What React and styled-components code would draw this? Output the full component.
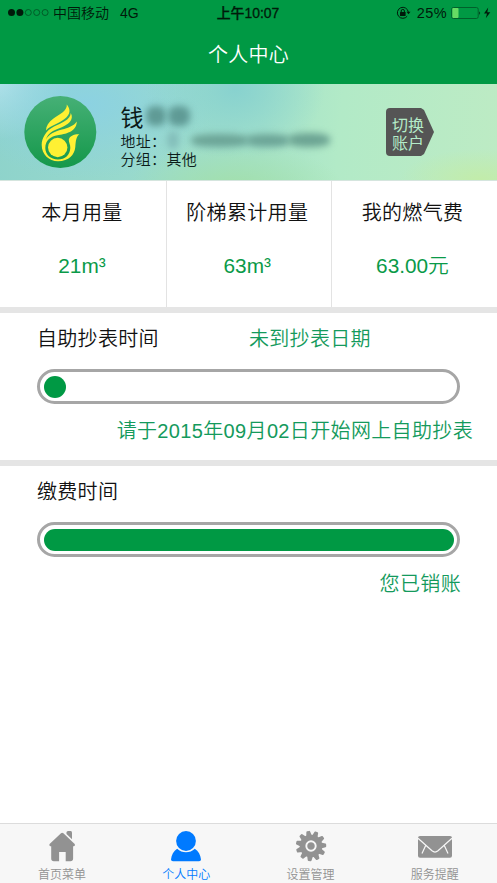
import React from "react";
import styled, { createGlobalStyle } from "styled-components";

const GlobalStyle = createGlobalStyle`
  * {
    box-sizing: border-box;
  }

  body {
    margin: 0;
    background: #ffffff;
    font-family: "Liberation Sans", "Noto Sans CJK SC", sans-serif;
    font-weight: 350;
    color: #111111;
  }
`

const Screen = styled.div`
  display: flex;
  flex-direction: column;
  width: 497px;
  height: 883px;
  overflow: hidden;
`

const StatusBar = styled.div`
  display: grid;
  grid-template-columns: 1fr auto 1fr;
  align-items: center;
  height: 26px;
  padding: 0 5px 0 7px;
  background: #009944;
  color: #001a0a;
  font-size: 14px;
  line-height: 26px;
  white-space: nowrap;
`

const Carrier = styled.div`
  display: flex;
  align-items: center;

  & svg {
    margin-right: 4px;
  }

  & span + span {
    margin-left: 11px;
  }
`

const Clock = styled.div`
  padding-right: 3px;
  font-weight: 500;
  font-size: 13.9px;
  -webkit-text-stroke: 0.3px currentColor;
`

const Indicators = styled.div`
  display: flex;
  align-items: center;
  justify-content: flex-end;

  & span {
    margin: 0 4px 0 6px;
    font-size: 14.5px;
    letter-spacing: 0.4px;
  }
`

const TitleBar = styled.h1`
  height: 58px;
  margin: 0;
  background: #009944;
  color: #ffffff;
  font-size: 20px;
  font-weight: 350;
  line-height: 59px;
  letter-spacing: 0.3px;
  text-align: center;
`

const Profile = styled.section`
  display: flex;
  align-items: flex-start;
  height: 97px;
  padding: 12px 63px 0 24px;
  border-bottom: 1px solid #d5e5de;
  background:
    radial-gradient(ellipse 80px 30px at 480px 95px, #c2ecaa 0%, transparent 100%),
    radial-gradient(ellipse 110px 50px at 235px 108px, #a2dfa8 0%, transparent 100%),
    radial-gradient(ellipse 90px 70px at 235px 5px, #88d2cf 0%, transparent 100%),
    radial-gradient(ellipse 130px 75px at 85px 20px, #8cd2e2 0%, transparent 100%),
    radial-gradient(ellipse 70px 55px at 0 0, #bce6ec 0%, transparent 100%),
    linear-gradient(95deg, #8ed3cb 0%, #99dacd 30%, #a5e2ca 52%, #b2eac7 68%, #bdebc4 100%);
`

const ProfileText = styled.div`
  flex: 1;
  margin-left: 23.5px;
  padding-top: 5px;
`

const ProfileLine = styled.div`
  display: flex;
  align-items: center;
  height: ${props => props.$big ? "30px" : "18px"};
  padding-bottom: ${props => props.$big ? "1px" : "0"};
  font-size: ${props => props.$big ? "23px" : "15px"};
  font-weight: ${props => props.$big ? 400 : 350};
  letter-spacing: ${props => props.$big ? "0" : "0.3px"};
  color: #0b1a18;
  white-space: nowrap;
`

const Smudge = styled.span`
  flex: none;
  width: ${props => props.$w}px;
  height: ${props => props.$h}px;
  margin-left: ${props => props.$gap || 0}px;
  border-radius: 40%;
  background: ${props => props.$color || "#568f8a"};
  filter: blur(3.5px);
`

const SwitchAccount = styled.button`
  display: block;
  width: 48px;
  height: 48px;
  margin-top: 12px;
  padding: 6px 10px 0 6px;
  border: 0;
  border-radius: 4px 0 0 4px;
  background: #555555;
  clip-path: polygon(0 0, 35px 0, 38px 2px, 48px 24px, 38px 46px, 35px 48px, 0 48px);
  color: #b4ecc8;
  font: 400 16px/18px "Liberation Sans", "Noto Sans CJK SC", sans-serif;
  text-align: left;
`

const Stats = styled.section`
  display: grid;
  grid-template-columns: 166.5px 165.5px 1fr;
  height: 126px;
`

const Stat = styled.div`
  padding: 18px 3px 0 0;
  text-align: center;
  border-right: 1px solid #e3e3e3;

  &:first-child {
    padding-right: 1.5px;
  }

  &:last-child {
    border-right: 0;
    padding-right: 4px;
  }
`

const StatLabel = styled.div`
  height: 30px;
  font-size: 20px;
  line-height: 28px;
  letter-spacing: 0.35px;
`

const StatValue = styled.div`
  margin-top: 22px;
  color: #0a9a48;
  font-size: 20.8px;
  line-height: 30px;
`

const Divider = styled.div`
  flex: none;
  height: 6px;
  background: #e5e5e5;
`

const Section = styled.section`
  height: 147px;
  padding: 12px 37px 0 37px;
  font-size: 20px;
  line-height: 28px;
  letter-spacing: 0.3px;
`

const SectionHead = styled.div`
  display: grid;
  grid-template-columns: 212px 1fr;
  height: 44px;
`

const Track = styled.div`
  height: 35px;
  padding: 3.5px;
  border: 3px solid #a6a6a6;
  border-radius: 18px;
`

const Fill = styled.div`
  min-width: 22.5px;
  height: 22.5px;
  border-radius: 12px;
  background: #009944;
`

const Green = styled.span`
  color: #149a5c;
`

const Note = styled(Green)`
  display: block;
  margin: 13px ${props => props.$right}px 0 -10px;
  letter-spacing: 0.35px;
  text-align: right;
  white-space: nowrap;
`

const TabBar = styled.nav`
  display: grid;
  grid-template-columns: repeat(4, 1fr);
  height: 60px;
  margin-top: auto;
  border-top: 1px solid #dcdcdc;
  background: #f7f7f7;
`

const Tab = styled.a`
  display: flex;
  flex-direction: column;
  align-items: center;
  padding: 6px 0 0;
  color: ${props => props.$active ? "#007aff" : "#929292"};
  font-size: 12px;
  line-height: 18px;

  & svg {
    display: block;
    margin-bottom: 4px;
  }
`

const Logo = () => (
  <svg width="73" height="73" viewBox="0 0 73 73">
    <defs>
      <linearGradient id="disc" x1="0" y1="0" x2="0" y2="1">
        <stop offset="0" stopColor="#46b076" />
        <stop offset="1" stopColor="#14984a" />
      </linearGradient>
    </defs>
    <circle cx="36.3" cy="36" r="36" fill="url(#disc)" />
    <g fill="#fff033">
      <path d="M42.800 8.500C43.500 15 35 18.500 29.500 22.500C24.500 26 22 30 22 34.500C27 29 35 27.500 40.500 23C47 18 46.500 13 42.800 8.500Z" />
      <path d="M46.800 17C46.500 24 37 27 30 30.500C22 34.500 17.700 42 17.700 49C17.700 58.500 25 65.200 34 65.200C45 65.200 50.500 59 51.300 51C51.800 45 52 41 55.300 38.200C50 38 45.500 40 44.800 43.500C44.600 46 46.500 48.500 46.300 52C46 59 41 63.500 34 63.500C26.500 63.500 21.300 58.500 21.300 52C21.300 44 27 40.500 33.500 39.300C41 38 52.500 36.500 52.800 25.600C50 30 44 32 38 33.600C30 35.500 25 38.500 22 43.500C24 37 29 34.500 36 32C44 28.800 50.500 24 46.800 17Z" />
      <circle cx="33.700" cy="51.500" r="9.700" />
    </g>
  </svg>
)

const SignalDots = () => (
  <svg width="42" height="10" viewBox="0 0 42 10">
    {[0, 1, 2, 3, 4].map(i => (
      <circle
        key={i}
        cx={4.5 + i * 8.4}
        cy="4.5"
        r={i < 2 ? 3.5 : 3}
        fill={i < 2 ? "#001a0a" : "none"}
        stroke={i < 2 ? "none" : "#004d22"}
        strokeWidth="0.8"
      />
    ))}
  </svg>
)

const RotationLock = () => (
  <svg width="15" height="14" viewBox="0 0 15 14">
    <path d="M11.200 10.200A5.500 5.500 0 1 1 12.300 6" fill="none" stroke="#001a0a" strokeWidth="1" />
    <path d="M10.500 5.800h4l-2 2.500z" fill="#001a0a" />
    <rect x="4" y="6" width="5.600" height="4" rx="0.500" fill="#001a0a" />
    <path d="M5.200 6.200V5a1.600 1.600 0 0 1 3.200 0v1.200" fill="none" stroke="#001a0a" strokeWidth="1" />
  </svg>
)

const Battery = () => (
  <svg width="41" height="14" viewBox="0 0 41 14">
    <rect x="0.700" y="1.500" width="26.500" height="11" rx="1.800" fill="none" stroke="#00602b" />
    <rect x="1.300" y="2.100" width="6.200" height="9.800" rx="0.800" fill="#66dc64" />
    <path d="M28.300 5.200q1.800 1.800 0 3.700z" fill="#001a0a" />
    <path d="M37.200 1.500L33 7.500h3L34.800 12.300L39.300 6.200h-3z" fill="#001a0a" />
  </svg>
)

const HomeIcon = () => (
  <svg width="30" height="32" viewBox="0 0 30 32" fill="#929292">
    <path d="M14 3.200q1.200-1 2.400 0L27.700 14q1 1.400-.7 2.200h-.9V28.500q0 2.700-2.700 2.700h-4.700v-9.200h-6.600v9.200H6.900q-2.700 0-2.700-2.700V16.200h-.9q-1.700-.8-.7-2.200z" />
    <path d="M19.500 2.500q0-1.500 1.500-1.500h2.700q1.300 0 1.300 1.500v6.800L19.500 4z" />
  </svg>
)

const PersonIcon = () => (
  <svg width="32" height="32" viewBox="0 0 32 32" fill="#007aff">
    <circle cx="16" cy="11" r="9.900" />
    <path d="M7.200 18.800C12 23.500 20 23.500 24.800 18.800C28.500 21 30.500 25 31 29.500Q31 31.300 29 31.300H3Q1 31.300 1 29.500C1.500 25 3.500 21 7.200 18.800Z" />
  </svg>
)

const GearIcon = () => (
  <svg width="32" height="32" viewBox="0 0 32 32" fill="#929292">
    <g transform="translate(16 16)">
      {Array.from({ length: 11 }, (_, i) => (
        <path
          key={i}
          transform={`rotate(${i * 360 / 11 - 11})`}
          d="M-2.900-10L-1.900-14.500Q-1.700-15.200-1-15.200H1Q1.700-15.200 1.900-14.500L2.900-10Z"
        />
      ))}
      <circle r="11.300" />
      <circle r="4.700" fill="none" stroke="#f7f7f7" strokeWidth="1.900" />
    </g>
  </svg>
)

const MailIcon = () => (
  <svg width="36" height="32" viewBox="0 0 36 32">
    <rect x="1" y="6" width="34" height="21.700" rx="2" fill="#929292" />
    <g fill="none" stroke="#f7f7f7" strokeWidth="1.200">
      <path d="M1 8.200L15 20.800Q18 23.300 21 20.800L35 8.200" />
      <path d="M8.800 15.300L5 23.500M27.200 15.300L31 23.500" />
    </g>
  </svg>
)

const stats = [
  { label: "本月用量", value: "21m³" },
  { label: "阶梯累计用量", value: "63m³" },
  { label: "我的燃气费", value: "63.00元" },
]

const tabs = [
  { label: "首页菜单", Icon: HomeIcon },
  { label: "个人中心", Icon: PersonIcon, active: true },
  { label: "设置管理", Icon: GearIcon },
  { label: "服务提醒", Icon: MailIcon },
]

const Progress = ({ value }) => (
  <Track>
    <Fill style={{ width: `${value}%` }} />
  </Track>
)

export default function App() {
  return (
    <Screen>
      <GlobalStyle />
      <StatusBar>
        <Carrier>
          <SignalDots />
          <span>中国移动</span>
          <span>4G</span>
        </Carrier>
        <Clock>上午10:07</Clock>
        <Indicators>
          <RotationLock />
          <span>25%</span>
          <Battery />
        </Indicators>
      </StatusBar>
      <TitleBar>个人中心</TitleBar>

      <Profile>
        <Logo />
        <ProfileText>
          <ProfileLine $big>
            钱
            <Smudge $w={20} $h={20} $gap={2} $color="#5f9a95" />
            <Smudge $w={22} $h={20} $gap={2} $color="#5f9a95" />
          </ProfileLine>
          <ProfileLine>
            地址：
            <Smudge $w={12} $h={18} $gap={1} $color="#83beba" />
            <Smudge $w={58} $h={13} $gap={12} $color="#6ca597" />
            <Smudge $w={44} $h={13} $gap={-3} $color="#6ca597" />
            <Smudge $w={42} $h={14} $gap={-2} $color="#6ca493" />
          </ProfileLine>
          <ProfileLine>分组：其他</ProfileLine>
        </ProfileText>
        <SwitchAccount>切换<br />账户</SwitchAccount>
      </Profile>

      <Stats>
        {stats.map(({ label, value }) => (
          <Stat key={label}>
            <StatLabel>{label}</StatLabel>
            <StatValue>{value}</StatValue>
          </Stat>
        ))}
      </Stats>

      <Divider />
      <Section>
        <SectionHead>
          <span>自助抄表时间</span>
          <Green>未到抄表日期</Green>
        </SectionHead>
        <Progress value={0} />
        <Note $right={-13}>请于2015年09月02日开始网上自助抄表</Note>
      </Section>

      <Divider />
      <Section>
        <SectionHead>
          <span>缴费时间</span>
        </SectionHead>
        <Progress value={100} />
        <Note $right={-1}>您已销账</Note>
      </Section>

      <TabBar>
        {tabs.map(({ label, Icon, active }) => (
          <Tab key={label} $active={active}>
            <Icon />
            {label}
          </Tab>
        ))}
      </TabBar>
    </Screen>
  );
}
